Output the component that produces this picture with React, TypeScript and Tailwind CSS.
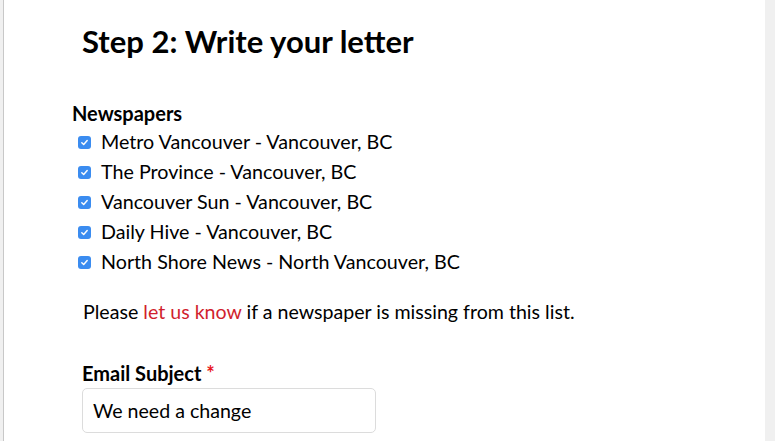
const papers = [
  "Metro Vancouver - Vancouver, BC",
  "The Province - Vancouver, BC",
  "Vancouver Sun - Vancouver, BC",
  "Daily Hive - Vancouver, BC",
  "North Shore News - North Vancouver, BC",
];

function Check() {
  return (
    <span className="flex h-[13px] w-[13px] items-center justify-center rounded-[3px] bg-[#3b8cf0]">
      <svg width="9" height="9" viewBox="0 0 10 10" fill="none">
        <path d="M2 5.2 L4.1 7.3 L8 2.8" stroke="white" strokeWidth="1.6" strokeLinecap="round" strokeLinejoin="round" />
      </svg>
    </span>
  );
}

export default function App() {
  return (
    <div className="flex h-[441px] w-[775px] overflow-hidden bg-[#f0f0f0] font-['Lato',sans-serif] text-black">
      <div className="ml-[3px] mr-[10px] flex-1 border-l border-[#c8c8c8] bg-white">
        <h1 className="ml-[78px] mt-[23px] text-[31px] font-bold leading-[36px]">Step 2: Write your letter</h1>

        <div className="ml-[68px] mt-[42px]">
          <h2 className="text-[20px] font-bold leading-[24px]">Newspapers</h2>
          <ul className="mt-[2px]">
            {papers.map((p) => (
              <li key={p} className="flex h-[30px] items-center">
                <span className="ml-[6px] mr-[10px]">
                  <Check />
                </span>
                <span className="text-[19.7px] leading-[30px]">{p}</span>
              </li>
            ))}
          </ul>
        </div>

        <p className="ml-[79px] mt-[23px] text-[19.6px] leading-[24px]">
          Please <a className="text-[#d11f2e]">let us know</a> if a newspaper is missing from this list.
        </p>

        <div className="ml-[78px] mt-[37px]">
          <label className="text-[20px] font-bold leading-[24px]">
            Email Subject <span className="text-[#e8141c]">*</span>
          </label>
          <div className="mt-[1px] flex h-[45px] w-[294px] items-center rounded-[5px] border border-[#dcdcdc] px-[10px] text-[19.6px]">
            We need a change
          </div>
        </div>
      </div>
    </div>
  );
}
